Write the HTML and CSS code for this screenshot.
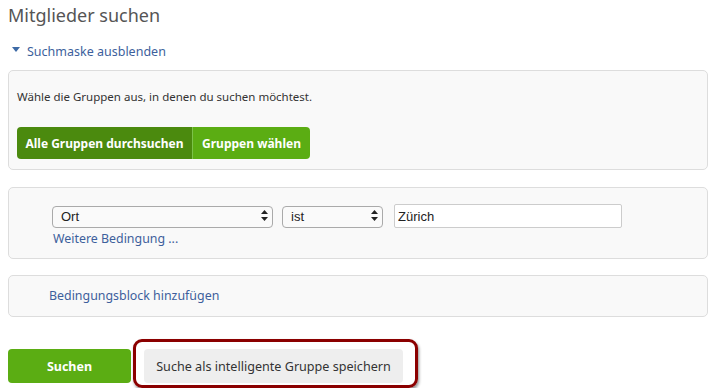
FILE: index.html
```html
<!DOCTYPE html>
<html lang="de">
<head>
    <meta charset="UTF-8">
    <title>Mitglieder suchen</title>
    <link rel="stylesheet" href="styles.css">
</head>
<body>
    <div class="page">
        <h1 class="title">Mitglieder suchen</h1>

        <a href="#" class="toggle-link">
            <svg class="caret" width="8" height="6" viewBox="0 0 8 6"><path d="M0 0 H8 L4 5 Z" fill="#3d6aa6"/></svg>
            Suchmaske ausblenden
        </a>

        <div class="panel panel-groups">
            <p class="hint">Wähle die Gruppen aus, in denen du suchen möchtest.</p>
            <div class="btn-group">
                <button class="btn btn-dark">Alle Gruppen durchsuchen</button>
                <button class="btn btn-light">Gruppen wählen</button>
            </div>
        </div>

        <div class="panel panel-conditions">
            <div class="condition-row">
                <span class="select-wrap wide">
                    <select><option>Ort</option></select>
                    <svg class="arrows" width="7" height="11" viewBox="0 0 7 11"><path d="M3.5 0 L7 4 H0 Z M0 7 H7 L3.5 11 Z" fill="#222"/></svg>
                </span>
                <span class="select-wrap narrow">
                    <select><option>ist</option></select>
                    <svg class="arrows" width="7" height="11" viewBox="0 0 7 11"><path d="M3.5 0 L7 4 H0 Z M0 7 H7 L3.5 11 Z" fill="#222"/></svg>
                </span>
                <input type="text" class="value-input" value="Zürich">
            </div>
            <a href="#" class="link more-link">Weitere Bedingung ...</a>
        </div>

        <div class="panel panel-block">
            <a href="#" class="link">Bedingungsblock hinzufügen</a>
        </div>

        <div class="actions">
            <button class="btn btn-search">Suchen</button>
            <div class="highlight">
                <button class="btn btn-save">Suche als intelligente Gruppe speichern</button>
            </div>
        </div>
    </div>
</body>
</html>
```

FILE: styles.css
```css
body {
    margin: 0;
    padding: 0;
    background: #fff;
    font-family: "Noto Sans", "Open Sans", sans-serif;
    color: #333;
}

.page {
    width: 700px;
    padding: 0 8px;
}

.title {
    margin: 2px 0 0;
    font-size: 18px;
    font-weight: normal;
    color: #555;
    line-height: 26px;
}

.toggle-link {
    display: flex;
    align-items: center;
    gap: 7px;
    margin: 13px 0 0 4px;
    height: 20px;
    font-size: 12.5px;
    color: #3d5f9c;
    text-decoration: none;
}

.caret {
    margin-top: -2px;
}

.panel {
    box-sizing: border-box;
    border: 1px solid #ddd;
    border-radius: 5px;
    background: #f9f9f9;
}

.panel-groups {
    margin-top: 9px;
    height: 100px;
    padding: 17px 8px 0;
}

.hint {
    margin: 0;
    font-size: 11.5px;
    line-height: 18px;
    color: #333;
}

.btn-group {
    display: flex;
    margin-top: 21px;
}

.btn {
    border: none;
    font-family: inherit;
    cursor: pointer;
    white-space: nowrap;
}

.btn-group .btn {
    height: 32px;
    color: #fff;
    font-size: 12px;
    font-weight: bold;
    padding: 0;
}

.btn-dark {
    width: 176px;
    background: #4b8a0e;
    border-radius: 4px 0 0 4px;
    border-right: 1px solid #7cc24a !important;
}

.btn-light {
    width: 117px;
    background: #5bad13;
    border-radius: 0 4px 4px 0;
}

.panel-conditions {
    margin-top: 17px;
    height: 72px;
    padding: 16px 0 0 43px;
}

.condition-row {
    display: flex;
    align-items: center;
}

.select-wrap {
    position: relative;
    display: inline-block;
}

.select-wrap select {
    appearance: none;
    -webkit-appearance: none;
    box-sizing: border-box;
    width: 100%;
    height: 22px;
    border: 1px solid #aaa;
    border-radius: 4px;
    background: #fafafa;
    font-family: "Liberation Sans", Arial, sans-serif;
    font-size: 13px;
    color: #222;
    padding: 0 8px;
}

.select-wrap .arrows {
    position: absolute;
    right: 5px;
    top: 6px;
    pointer-events: none;
}

.wide {
    width: 221px;
}

.narrow {
    width: 101px;
    margin-left: 9px;
}

.value-input {
    box-sizing: border-box;
    width: 228px;
    height: 24px;
    margin-left: 11px;
    border: 1px solid #ccc;
    border-radius: 2px;
    background: #fff;
    font-family: "Liberation Sans", Arial, sans-serif;
    font-size: 13px;
    color: #222;
    padding: 0 3px;
}

.link {
    font-size: 12.4px;
    color: #3d5f9c;
    text-decoration: none;
}

.more-link {
    display: block;
    margin-top: 1px;
    margin-left: 1px;
    line-height: 20px;
}

.panel-block {
    margin-top: 16px;
    height: 42px;
    padding: 8px 0 0 40px;
    line-height: 20px;
}

.actions {
    display: flex;
    align-items: flex-start;
    margin-top: 22px;
}

.btn-search {
    width: 123px;
    height: 34px;
    margin-top: 10px;
    background: #5bad13;
    color: #fff;
    font-size: 12.5px;
    font-weight: bold;
    border-radius: 4px;
}

.highlight {
    margin-left: 2px;
    padding: 7px 12px 2px 8px;
    border: 3px solid #8b0000;
    border-radius: 9px;
    box-shadow: 1px 2px 3px rgba(0, 0, 0, 0.45);
}

.btn-save {
    width: 259px;
    height: 34px;
    background: #eee;
    color: #333;
    font-size: 12.6px;
    border-radius: 4px;
}
```
